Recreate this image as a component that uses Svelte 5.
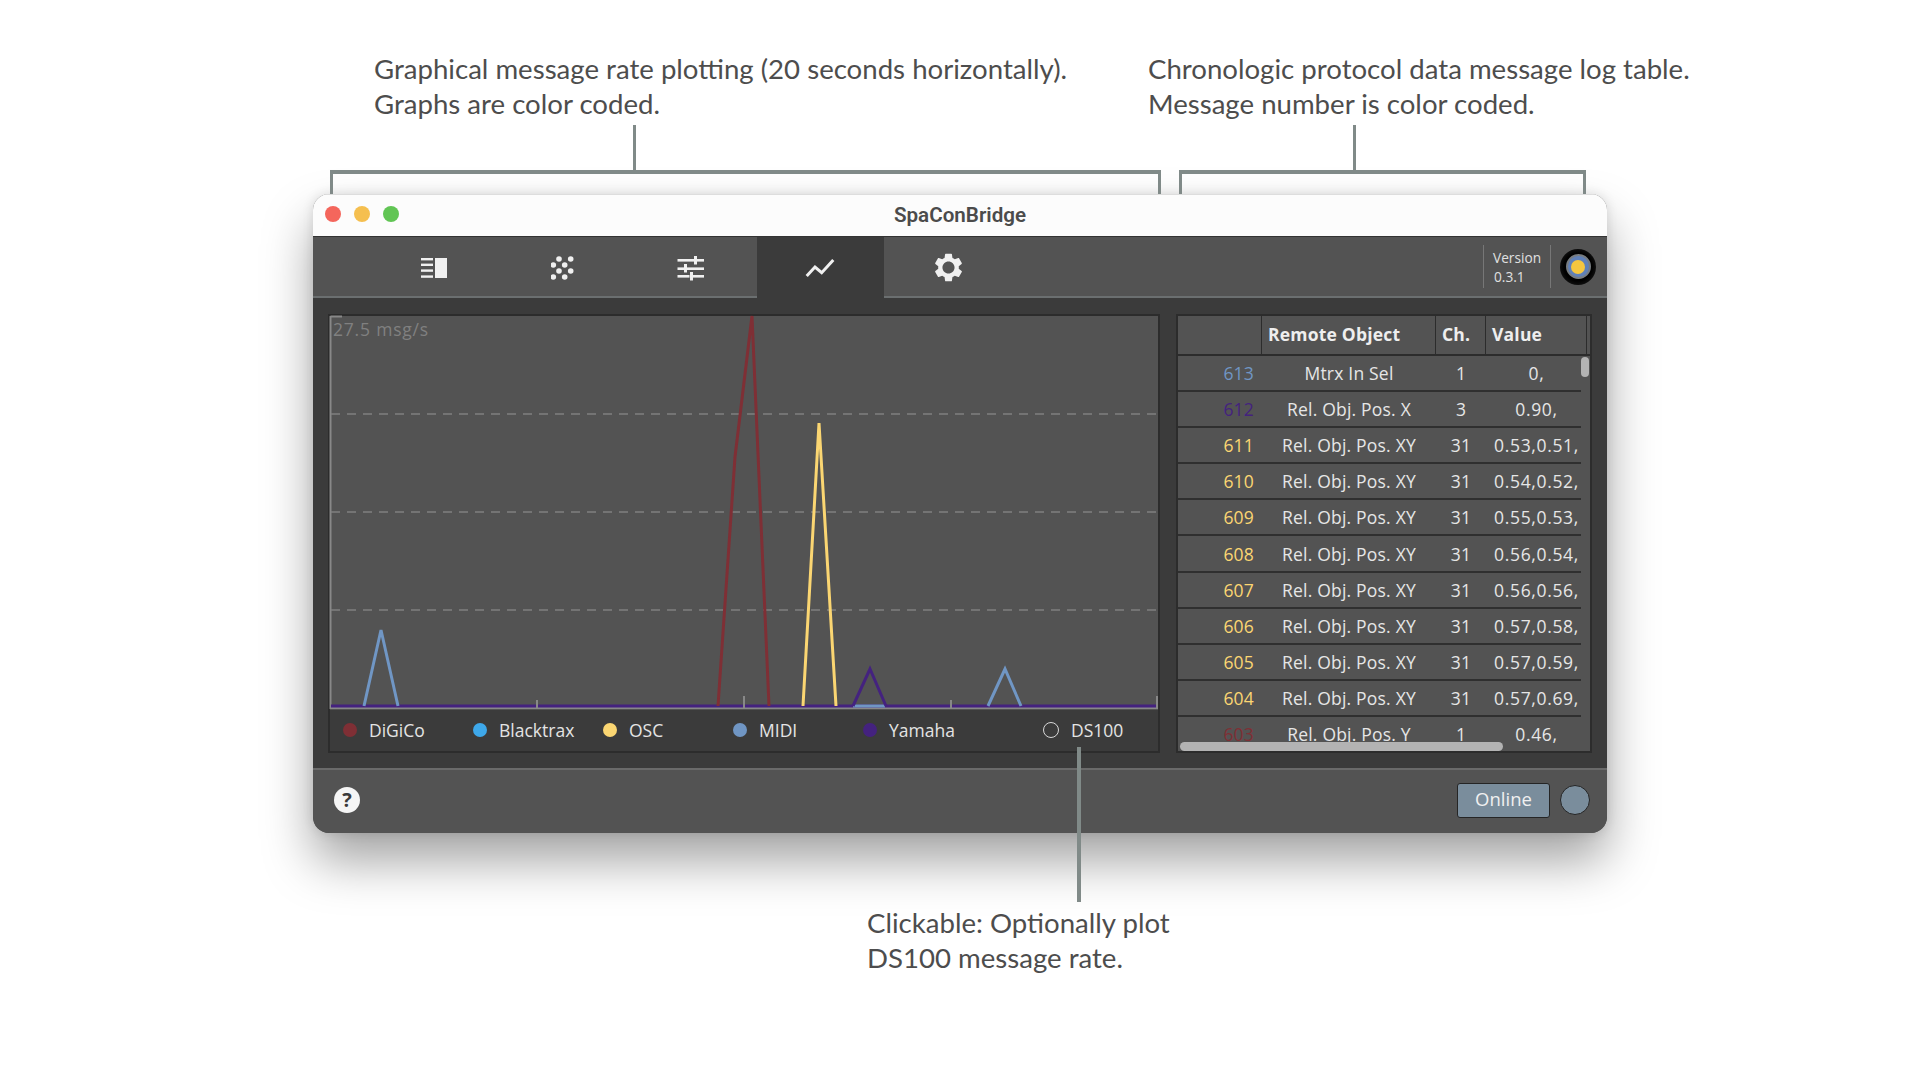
<script>
	const legend = [
		{ name: 'DiGiCo', color: '#7f2f35' },
		{ name: 'Blacktrax', color: '#3ea8ea' },
		{ name: 'OSC', color: '#fbd672' },
		{ name: 'MIDI', color: '#7096c4' },
		{ name: 'Yamaha', color: '#44227f' },
		{ name: 'DS100', color: null }
	];

	const midi = '#7096c4';
	const osc = '#fbd672';
	const digico = '#7f2f35';
	const yamaha = '#44227f';

	const rows = [
		{ num: 613, color: midi, obj: 'Mtrx In Sel', ch: 1, val: '0,' },
		{ num: 612, color: yamaha, obj: 'Rel. Obj. Pos. X', ch: 3, val: '0.90,' },
		{ num: 611, color: osc, obj: 'Rel. Obj. Pos. XY', ch: 31, val: '0.53,0.51,' },
		{ num: 610, color: osc, obj: 'Rel. Obj. Pos. XY', ch: 31, val: '0.54,0.52,' },
		{ num: 609, color: osc, obj: 'Rel. Obj. Pos. XY', ch: 31, val: '0.55,0.53,' },
		{ num: 608, color: osc, obj: 'Rel. Obj. Pos. XY', ch: 31, val: '0.56,0.54,' },
		{ num: 607, color: osc, obj: 'Rel. Obj. Pos. XY', ch: 31, val: '0.56,0.56,' },
		{ num: 606, color: osc, obj: 'Rel. Obj. Pos. XY', ch: 31, val: '0.57,0.58,' },
		{ num: 605, color: osc, obj: 'Rel. Obj. Pos. XY', ch: 31, val: '0.57,0.59,' },
		{ num: 604, color: osc, obj: 'Rel. Obj. Pos. XY', ch: 31, val: '0.57,0.69,' },
		{ num: 603, color: digico, obj: 'Rel. Obj. Pos. Y', ch: 1, val: '0.46,' }
	];
</script>

<div class="page">
	<!-- callouts around the window -->
	<p class="note note-plot">Graphical message rate plotting (20 seconds horizontally).<br />Graphs are color coded.</p>
	<p class="note note-log">Chronologic protocol data message log table.<br />Message number is color coded.</p>
	<p class="note note-ds">Clickable: Optionally plot<br />DS100 message rate.</p>

	<div class="bracket bracket-plot"></div>
	<div class="stem stem-plot"></div>
	<div class="bracket bracket-log"></div>
	<div class="stem stem-log"></div>

	<div class="window">
		<header class="titlebar">
			<div class="lights">
				<span class="light red"></span>
				<span class="light yellow"></span>
				<span class="light green"></span>
			</div>
			<span class="title">SpaConBridge</span>
		</header>

		<nav class="toolbar">
			<div class="tabs">
				<div class="tab">
					<svg width="28" height="24" viewBox="0 0 28 24" fill="#f0f0f0">
						<rect x="1" y="2" width="12" height="2.4" />
						<rect x="1" y="7.6" width="12" height="2.4" />
						<rect x="1" y="13.4" width="12" height="2.4" />
						<rect x="1" y="19.4" width="12" height="2.4" />
						<rect x="15" y="2" width="12" height="20" />
					</svg>
				</div>
				<div class="tab">
					<svg width="24" height="24" viewBox="0 0 24 24" fill="#f0f0f0">
						<circle cx="8" cy="3" r="2.8" />
						<circle cx="19.7" cy="3" r="2.8" />
						<circle cx="2.3" cy="9" r="2.8" />
						<circle cx="13.7" cy="9" r="2.8" />
						<circle cx="8" cy="15" r="2.8" />
						<circle cx="19.7" cy="15" r="2.8" />
						<circle cx="2.3" cy="21" r="2.8" />
						<circle cx="13.7" cy="21" r="2.8" />
					</svg>
				</div>
				<div class="tab">
					<svg width="28" height="26" viewBox="0 0 28 26" fill="#f0f0f0">
						<rect x="0.5" y="4" width="16.5" height="2.6" />
						<rect x="20" y="4" width="7" height="2.6" />
						<rect x="17" y="1" width="3" height="8.5" />
						<rect x="0.5" y="12.4" width="6.5" height="2.6" />
						<rect x="10" y="12.4" width="17" height="2.6" />
						<rect x="7" y="9" width="3" height="8.5" />
						<rect x="0.5" y="20" width="12" height="2.6" />
						<rect x="16" y="20" width="11" height="2.6" />
						<rect x="13" y="17" width="3" height="8.5" />
					</svg>
				</div>
				<div class="tab active">
					<svg width="30" height="24" viewBox="0 0 30 24" fill="none" stroke="#f0f0f0" stroke-width="3">
						<path d="M1.7 20 L10 11 L16.7 16.7 L28.3 4" />
					</svg>
				</div>
				<div class="tab">
					<svg width="33" height="33" viewBox="0 0 24 24" fill="#f0f0f0">
						<path
							fill-rule="evenodd"
							d="M19.43 12.98c.04-.32.07-.64.07-.98s-.03-.66-.07-.98l2.11-1.65c.19-.15.24-.42.12-.64l-2-3.46c-.12-.22-.39-.3-.61-.22l-2.49 1c-.52-.4-1.08-.73-1.69-.98l-.38-2.65C14.46 2.18 14.25 2 14 2h-4c-.25 0-.46.18-.49.42l-.38 2.65c-.61.25-1.17.59-1.69.98l-2.49-1c-.23-.09-.49 0-.61.22l-2 3.46c-.13.22-.07.49.12.64l2.11 1.65c-.04.32-.07.65-.07.98s.03.66.07.98l-2.11 1.65c-.19.15-.24.42-.12.64l2 3.46c.12.22.39.3.61.22l2.49-1c.52.4 1.08.73 1.69.98l.38 2.65c.03.24.24.42.49.42h4c.25 0 .46-.18.49-.42l.38-2.65c.61-.25 1.17-.59 1.69-.98l2.49 1c.23.09.49 0 .61-.22l2-3.46c.12-.22.07-.49-.12-.64l-2.11-1.65zM12 16.4c-2.43 0-4.4-1.97-4.4-4.4s1.97-4.4 4.4-4.4 4.4 1.97 4.4 4.4-1.97 4.4-4.4 4.4z"
						/>
					</svg>
				</div>
			</div>
			<div class="toolbar-right">
				<div class="version">
					<span>Version</span>
					<span class="version-num">0.3.1</span>
				</div>
				<div class="logo"><span class="logo-ring"><span class="logo-core"></span></span></div>
			</div>
		</nav>

		<main class="content">
			<section class="chart">
				<div class="plot">
					<span class="rate">27.5 msg/s</span>
					<svg class="graph" width="829" height="394" viewBox="0 0 829 394" fill="none">
						<!-- origin is x 329, y 315 of the page -->
						<g stroke="#888888" stroke-width="2">
							<path d="M1.5 1 V393 H828 V381" />
							<path d="M1.5 1.5 H13" />
							<path d="M208 393 V385" />
							<path d="M415 393 V381" />
							<path d="M622 393 V385" />
						</g>
						<g stroke="#808080" stroke-width="1.5" stroke-dasharray="9 7">
							<path d="M2 99 H828" />
							<path d="M2 197 H828" />
							<path d="M2 295 H828" />
						</g>
						<g stroke-width="3">
							<path d="M2 391 H207 M209 391 H414 M416 391 H621 M623 391 H827" stroke="#44227f" />
							<path d="M35 391 L52 315 L69 391" stroke="#7096c4" />
							<path d="M659 391 L676 354 L692 391" stroke="#7096c4" />
							<path d="M524 391 H556" stroke="#7096c4" />
							<path d="M389 391 L406 142 L423 1 L431 185 L440 391" stroke="#7f2f35" />
							<path d="M474 391 L490 108 L507 391" stroke="#fbd672" />
							<path d="M524 391 L541 354 L557 391" stroke="#44227f" />
						</g>
					</svg>
				</div>
				<div class="legend">
					{#each legend as item}
						<div class="legend-item">
							{#if item.color}
								<span class="dot" style="background: {item.color}"></span>
							{:else}
								<span class="dot hollow"></span>
							{/if}
							<span>{item.name}</span>
						</div>
					{/each}
				</div>
			</section>

			<section class="log">
				<div class="log-head">
					<div class="head-cell"></div>
					<div class="head-cell">Remote Object</div>
					<div class="head-cell">Ch.</div>
					<div class="head-cell">Value</div>
				</div>
				<div class="log-body">
					{#each rows as row}
						<div class="row">
							<span class="num" style="color: {row.color}">{row.num}</span>
							<span class="center">{row.obj}</span>
							<span class="center">{row.ch}</span>
							<span class="center val">{row.val}</span>
						</div>
					{/each}
				</div>
				<div class="vscroll"></div>
				<div class="hscroll"></div>
			</section>
		</main>

		<footer class="footer">
			<span class="help">?</span>
			<div class="online">
				<button class="online-btn">Online</button>
				<span class="online-led"></span>
			</div>
		</footer>
	</div>

	<div class="stem stem-ds"></div>
</div>

<style>
	:global(body) {
		background: #ffffff;
	}
	.page {
		position: relative;
		width: 1920px;
		height: 1080px;
		padding: 194px 313px 0;
		box-sizing: border-box;
		overflow: hidden;
		font-family: 'Open Sans', 'Liberation Sans', sans-serif;
	}

	.note {
		position: absolute;
		margin: 0;
		font-family: Lato, 'Liberation Sans', sans-serif;
		font-size: 27.6px;
		line-height: 35px;
		color: #4d4d4d;
		white-space: nowrap;
	}
	.note-plot {
		left: 374px;
		top: 51px;
	}
	.note-log {
		left: 1148px;
		top: 51px;
	}
	.note-ds {
		left: 867px;
		top: 905px;
	}

	.bracket {
		position: absolute;
		top: 170px;
		height: 30px;
		border: 3px solid #808a88;
		border-top-width: 4px;
		border-bottom: none;
		box-sizing: border-box;
	}
	.bracket-plot {
		left: 330px;
		width: 831px;
	}
	.bracket-log {
		left: 1179px;
		width: 407px;
	}
	.stem {
		position: absolute;
		width: 3px;
		background: #808a88;
	}
	.stem-plot {
		left: 633px;
		top: 125px;
		height: 47px;
	}
	.stem-log {
		left: 1353px;
		top: 125px;
		height: 47px;
	}
	.stem-ds {
		left: 1077px;
		top: 747px;
		height: 155px;
		width: 4px;
	}

	.window {
		position: relative;
		width: 1294px;
		height: 639px;
		display: flex;
		flex-direction: column;
		border-radius: 16px;
		overflow: hidden;
		background: #535353;
	}
	.page::before {
		content: '';
		position: absolute;
		left: 313px;
		top: 194px;
		width: 1294px;
		height: 639px;
		border-radius: 16px;
		box-shadow:
			0 28px 50px rgba(0, 0, 0, 0.36),
			0 0 12px rgba(0, 0, 0, 0.12);
	}

	.titlebar {
		position: relative;
		height: 42px;
		flex: none;
		display: flex;
		align-items: center;
		justify-content: center;
		background: #fcfcfc;
		border-top: 1px solid #dddddd;
		box-sizing: border-box;
	}
	.lights {
		position: absolute;
		left: 12px;
		top: 11px;
		display: flex;
		gap: 13px;
	}
	.light {
		width: 16px;
		height: 16px;
		border-radius: 50%;
	}
	.red {
		background: #f4665c;
	}
	.yellow {
		background: #f5bf4f;
	}
	.green {
		background: #61c554;
	}
	.title {
		margin-top: -2px;
		font-family: Roboto, 'Liberation Sans', sans-serif;
		font-size: 20.6px;
		font-weight: 600;
		color: #4b4b4b;
	}

	.toolbar {
		height: 62px;
		flex: none;
		display: flex;
		justify-content: space-between;
		background: #535353;
		border-top: 1px solid #333333;
		border-bottom: 2px solid #6b6f70;
		box-sizing: border-box;
	}
	.tabs {
		display: flex;
		margin-left: 57px;
		margin-bottom: -2px;
	}
	.tab {
		width: 128.6px;
		display: flex;
		align-items: center;
		justify-content: center;
	}
	.tab.active {
		width: 127px;
		margin: 0 0.8px;
		background: #3b3b3b;
	}
	.toolbar-right {
		display: flex;
		align-items: center;
		padding-right: 11px;
	}
	.version {
		height: 43px;
		width: 68px;
		padding-left: 9px;
		margin-right: 9px;
		box-sizing: border-box;
		display: flex;
		flex-direction: column;
		justify-content: center;
		gap: 2px;
		border-left: 1px solid #777777;
		border-right: 1px solid #777777;
		font-size: 13.7px;
		line-height: 17px;
		color: #e0e0e0;
	}
	.version-num {
		padding-left: 1px;
	}
	.logo {
		width: 36px;
		height: 36px;
		border-radius: 50%;
		background: radial-gradient(circle, #000 55%, #141414 78%, #444 100%);
		display: flex;
		align-items: center;
		justify-content: center;
	}
	.logo-ring {
		width: 25px;
		height: 25px;
		border-radius: 50%;
		background: #5f80b8;
		border: 2px solid #777c80;
		box-sizing: border-box;
		display: flex;
		align-items: center;
		justify-content: center;
	}
	.logo-core {
		width: 14px;
		height: 14px;
		border-radius: 50%;
		background: #f5c63f;
	}

	.content {
		flex: 1;
		display: flex;
		gap: 16px;
		padding: 16px 15px 15px;
		background: #3b3b3b;
		min-height: 0;
	}
	.chart {
		width: 832px;
		flex: none;
		display: flex;
		flex-direction: column;
		background: #3b3b3b;
		border: 2px solid #2c2c2c;
		box-sizing: border-box;
	}
	.plot {
		position: relative;
		height: 394px;
		flex: none;
		background: #535353;
	}
	.rate {
		position: absolute;
		left: 3px;
		top: 1px;
		font-size: 17.5px;
		letter-spacing: 0.8px;
		color: #808080;
	}
	.graph {
		position: absolute;
		left: -1px;
		top: -1px;
		display: block;
	}
	.legend {
		flex: 1;
		display: grid;
		grid-template-columns: repeat(5, 130px) auto;
		padding: 0 0 1px 13px;
		align-items: center;
	}
	.legend-item {
		display: flex;
		align-items: center;
		gap: 12px;
		font-size: 17.5px;
		color: #e4e4e4;
	}
	.legend-item:last-child {
		margin-left: 50px;
	}
	.dot {
		width: 14px;
		height: 14px;
		border-radius: 50%;
	}
	.dot.hollow {
		width: 16px;
		height: 16px;
		border: 1.5px solid #d8d8d8;
		box-sizing: border-box;
	}

	.log {
		position: relative;
		width: 416px;
		flex: none;
		border: 2px solid #2c2c2c;
		box-sizing: border-box;
		background: #535353;
		overflow: hidden;
		font-size: 17.5px;
		letter-spacing: 0.2px;
		color: #e6e6e6;
	}
	.log-head {
		display: grid;
		grid-template-columns: 84px 174px 50px 101px;
		height: 38px;
		border-bottom: 2px solid #2c2c2c;
	}
	.head-cell {
		display: flex;
		align-items: center;
		padding: 0 0 2px 6px;
		font-weight: 700;
		color: #eeeeee;
		border-right: 1.5px solid #2c2c2c;
	}
	.log-body {
		width: 403px;
		overflow: hidden;
	}
	.row {
		display: grid;
		grid-template-columns: 84px 174px 50px 101px;
		height: 36.1px;
		align-items: center;
		box-sizing: border-box;
		border-bottom: 2px solid #2f2f2f;
		white-space: nowrap;
	}
	.num {
		text-align: right;
		padding-right: 8px;
	}
	.center {
		text-align: center;
	}
	.val {
		letter-spacing: 0.65px;
	}
	.vscroll {
		position: absolute;
		right: 1px;
		top: 41px;
		width: 8px;
		height: 20px;
		border-radius: 4px;
		background: #b3b3b3;
	}
	.hscroll {
		position: absolute;
		left: 2px;
		bottom: 0;
		width: 323px;
		height: 9px;
		border-radius: 5px;
		background: #b3b3b3;
	}

	.footer {
		height: 65px;
		flex: none;
		display: flex;
		align-items: center;
		justify-content: space-between;
		padding: 0 17px 3px 21px;
		background: #535353;
		border-top: 2px solid #6a6a6a;
		box-sizing: border-box;
	}
	.help {
		width: 26px;
		height: 26px;
		border-radius: 50%;
		background: #f5f5f5;
		color: #3b3b3b;
		font-size: 20px;
		font-weight: 700;
		line-height: 26px;
		text-align: center;
	}
	.online {
		display: flex;
		align-items: center;
		gap: 10px;
	}
	.online-btn {
		width: 93px;
		height: 35px;
		padding: 0 0 4px;
		border: 1.5px solid #252525;
		border-radius: 3px;
		background: #7a8d9c;
		font-family: inherit;
		font-size: 18.5px;
		color: #f0f0f0;
	}
	.online-led {
		width: 30px;
		height: 30px;
		border-radius: 50%;
		background: #7a8d9c;
		border: 1.5px solid #252525;
		box-sizing: border-box;
	}
</style>
